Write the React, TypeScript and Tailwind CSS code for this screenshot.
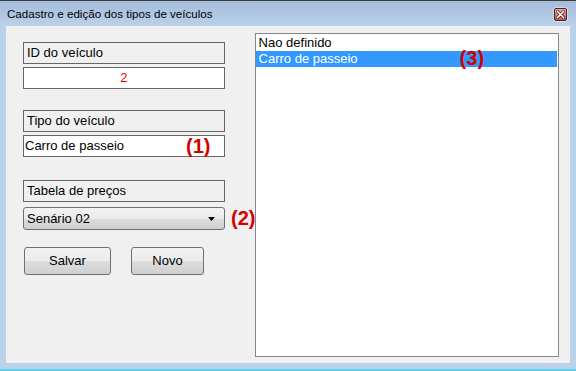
import React from "react";

const F = { fontFamily: '"Liberation Sans", Arial, sans-serif' };

export default function App() {
  return (
    <div
      className="w-[576px] h-[371px] flex flex-col bg-[#bad1eb] border-t border-[#3a3a3a] overflow-hidden"
      style={F}
    >
      {/* Title bar */}
      <div className="h-[25px] flex items-center justify-between pl-[7px] pr-[9px] bg-gradient-to-b from-[#a3bcda] to-[#bbd1ea] shrink-0">
        <span className="text-[11.6px] text-black leading-none pt-[1px]">
          Cadastro e edição dos tipos de veículos
        </span>
        <div className="w-[13px] h-[13px] mt-[1px] border border-[#5a1c1c] rounded-[2px] bg-gradient-to-b from-[#e9aaa2] to-[#c5584e] flex items-center justify-center shadow-[0_0_0_1px_rgba(255,255,255,0.4)]">
          <svg width="9" height="9" viewBox="0 0 9 9">
            <path d="M1.5 1.5 L7.5 7.5 M7.5 1.5 L1.5 7.5" stroke="#3a1010" strokeWidth="3" strokeLinecap="square" />
            <path d="M1.5 1.5 L7.5 7.5 M7.5 1.5 L1.5 7.5" stroke="#ffffff" strokeWidth="1.6" strokeLinecap="square" />
          </svg>
        </div>
      </div>

      {/* Body */}
      <div className="flex-1 flex flex-col px-[6px]">
        <div className="relative h-[337px] bg-[#f0f0f0] flex pt-[7px] pl-[17px] pr-[11px]">
          {/* Left column */}
          <div className="w-[202px] flex flex-col mt-[9px] text-[13px] text-black">
            <div className="h-[22px] border border-[#666666] flex items-center pl-[3px]">ID do veículo</div>
            <div className="h-[22px] mt-[3px] border border-[#666666] bg-white flex items-center justify-center text-[#ff0000]">
              2
            </div>

            <div className="h-[22px] mt-[21px] border border-[#666666] flex items-center pl-[3px]">Tipo do veículo</div>
            <div className="relative h-[22px] mt-[3px] border border-[#666666] bg-white flex items-center pl-[1px]">
              Carro de passeio
              <span className="absolute left-[162px] top-[-1px] text-[20px] font-bold text-[#d40000] leading-[22px]">(1)</span>
            </div>

            <div className="h-[22px] mt-[23px] border border-[#666666] flex items-center pl-[3px]">Tabela de preços</div>
            <div className="relative h-[23px] mt-[5px] border border-[#707070] rounded-[3px] bg-[linear-gradient(#f2f2f2_0%,#ebebeb_50%,#dddddd_50%,#cfcfcf_100%)] flex items-center justify-between pl-[3px] pr-[9px]">
              <span>Senário 02</span>
              <svg width="7" height="4" viewBox="0 0 7 4">
                <path d="M0 0 H7 L3.5 4 Z" fill="#000" />
              </svg>
              <span className="absolute left-[207px] top-[-1px] text-[20px] font-bold text-[#d40000] leading-[22px]">(2)</span>
            </div>

            <div className="flex mt-[17px] ml-[1px] gap-[20px]">
              <button className="w-[87px] h-[28px] border border-[#707070] rounded-[3px] bg-[linear-gradient(#f2f2f2_0%,#ebebeb_50%,#dddddd_50%,#cfcfcf_100%)] text-[13px] text-black flex items-center justify-center">
                Salvar
              </button>
              <button className="w-[73px] h-[28px] border border-[#707070] rounded-[3px] bg-[linear-gradient(#f2f2f2_0%,#ebebeb_50%,#dddddd_50%,#cfcfcf_100%)] text-[13px] text-black flex items-center justify-center">
                Novo
              </button>
            </div>
          </div>

          {/* List */}
          <div className="relative ml-[30px] w-[305px] h-[324px] border border-[#828790] bg-white pt-[1px] pr-[1px] text-[13px]">
            <div className="h-[16px] flex items-center pl-[3px] text-black">Nao definido</div>
            <div className="h-[16px] flex items-center pl-[3px] bg-[#3399ff] text-white">Carro de passeio</div>
            <span className="absolute left-[204px] top-[13px] text-[20px] font-bold text-[#d40000] leading-[22px]">(3)</span>
          </div>
        </div>
      </div>
      <div className="h-[2px] bg-[#5ad2f0] shrink-0" />
    </div>
  );
}
